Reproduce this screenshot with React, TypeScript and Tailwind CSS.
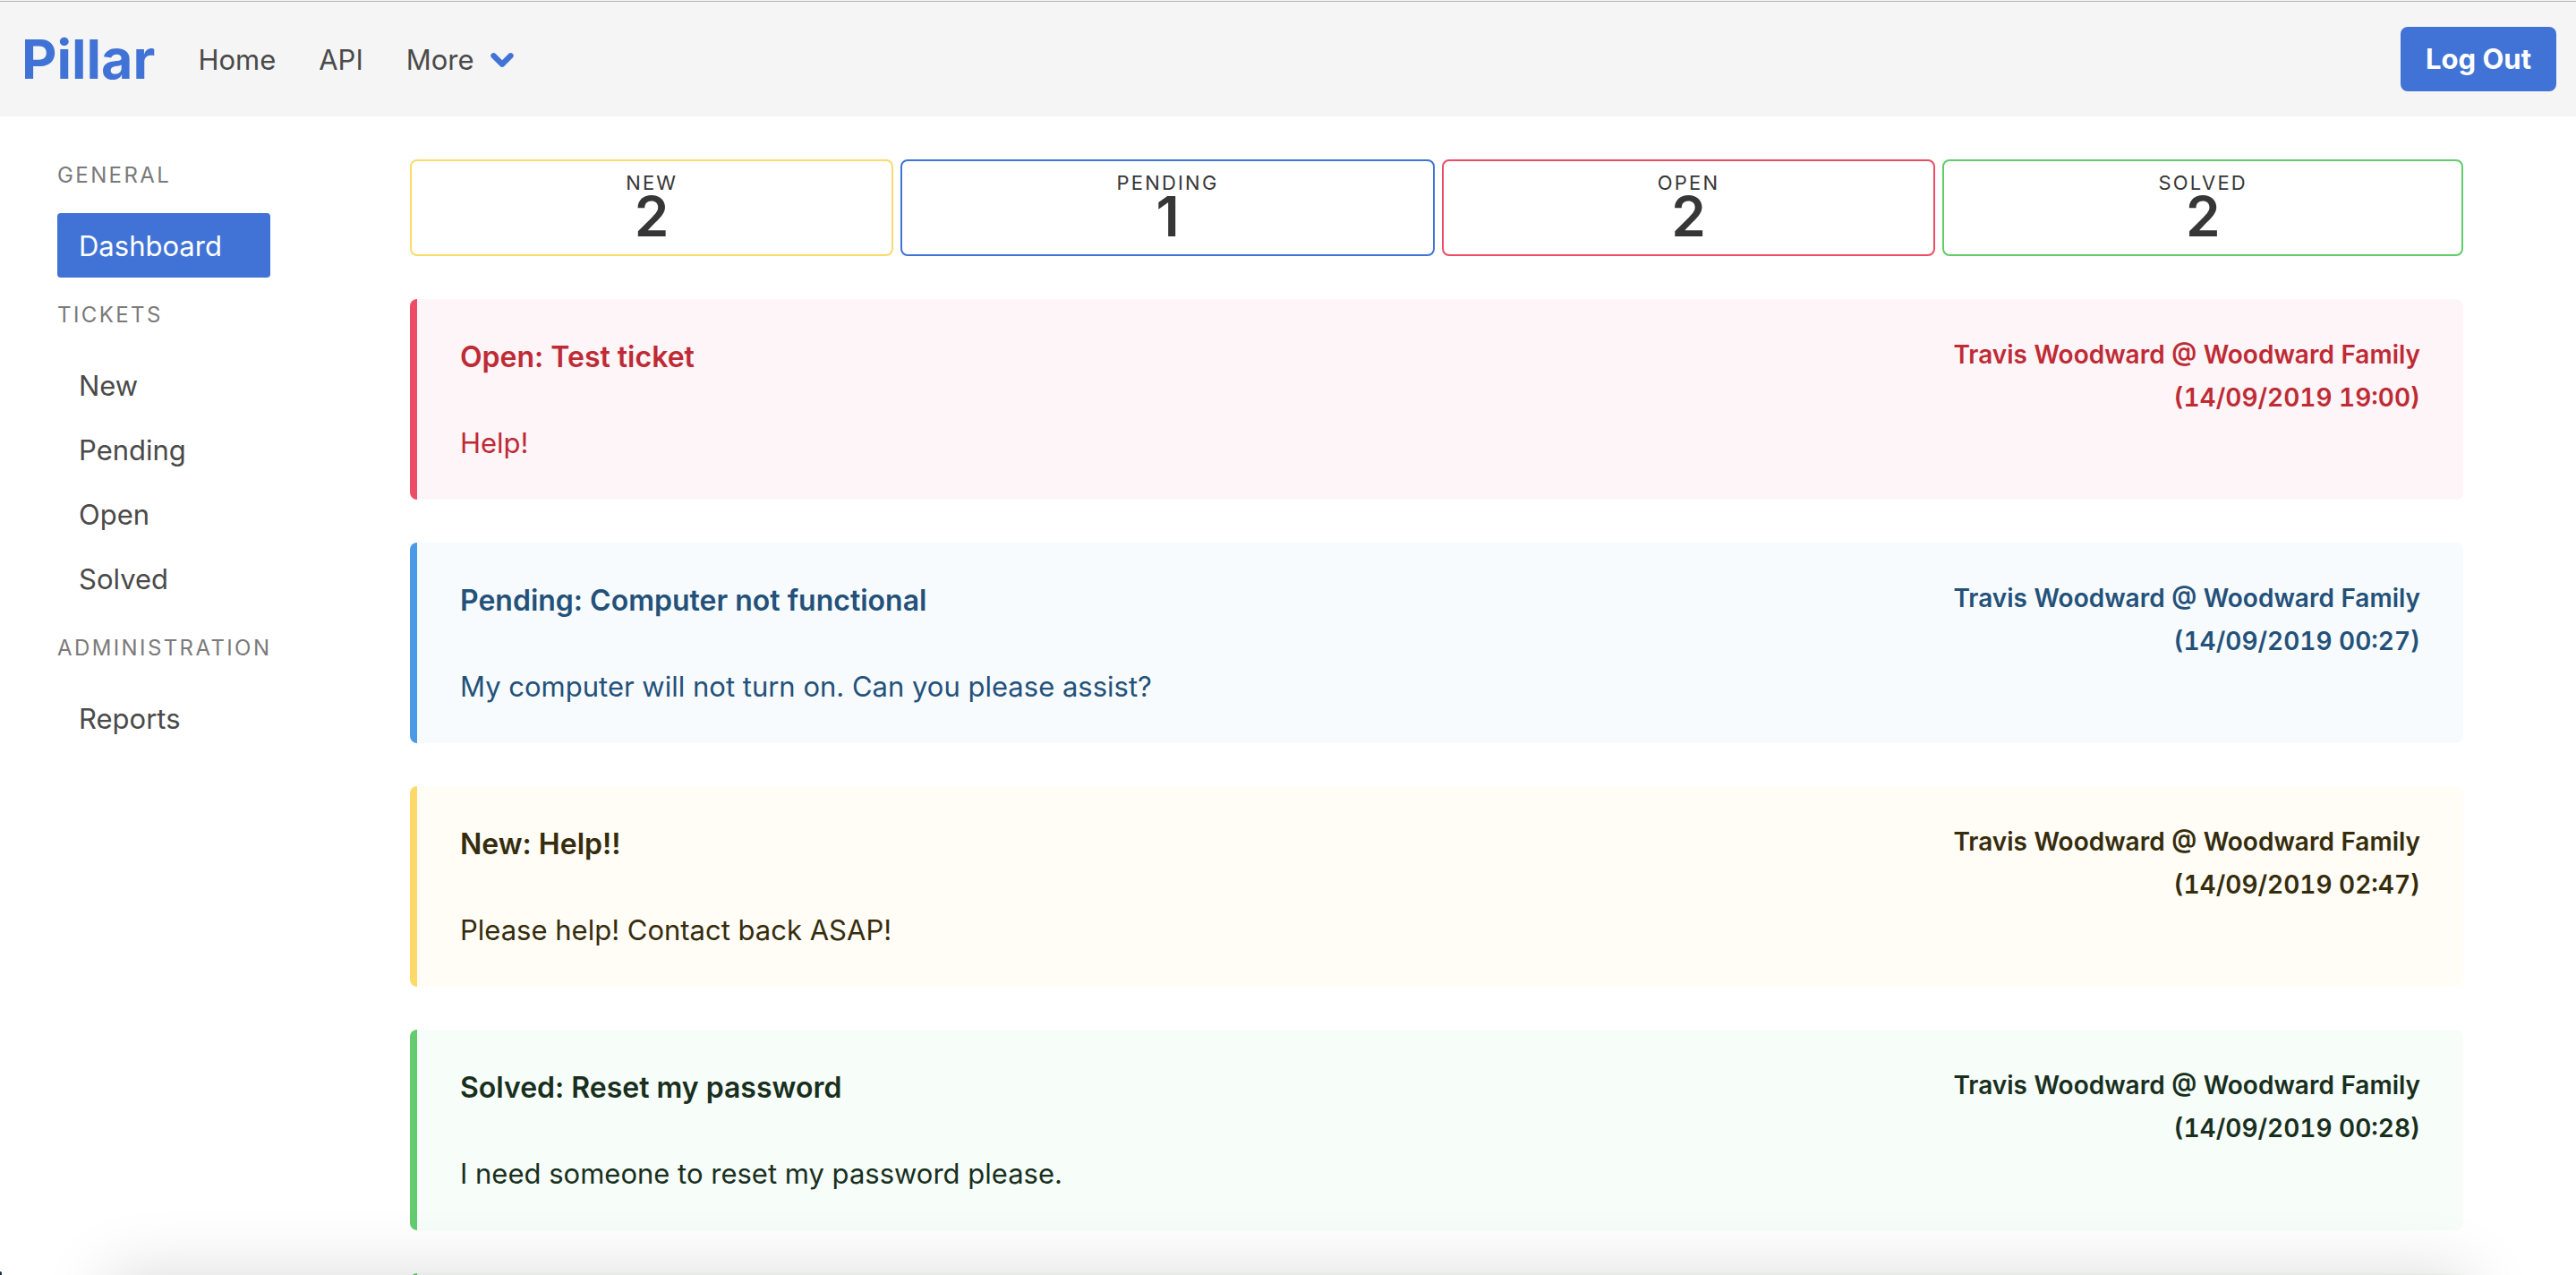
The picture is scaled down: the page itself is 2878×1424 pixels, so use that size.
import { ChevronDown } from "lucide-react";

type Status = "New" | "Pending" | "Open" | "Solved";

const stats = [
  { label: "New", count: 2, border: "border-[#fadb6b]" },
  { label: "Pending", count: 1, border: "border-[#4173d6]" },
  { label: "Open", count: 2, border: "border-[#ec4c66]" },
  { label: "Solved", count: 2, border: "border-[#60cc6a]" },
];

const menu = [
  { label: "General", items: ["Dashboard"] },
  { label: "Tickets", items: ["New", "Pending", "Open", "Solved"] },
  { label: "Administration", items: ["Reports"] },
];

const tone: Record<Status, string> = {
  Open: "bg-[#fef5f8] border-[#ec4c66] text-[#be2b35]",
  Pending: "bg-[#f7fbfe] border-[#4a9ae6] text-[#245179]",
  New: "bg-[#fffdf6] border-[#fdd96a] text-[#352c0d]",
  Solved: "bg-[#f7fdf9] border-[#64cc6e] text-[#182f1e]",
};

const tickets: { status: Status; title: string; body: string; time: string }[] = [
  { status: "Open", title: "Test ticket", body: "Help!", time: "14/09/2019 19:00" },
  {
    status: "Pending",
    title: "Computer not functional",
    body: "My computer will not turn on. Can you please assist?",
    time: "14/09/2019 00:27",
  },
  { status: "New", title: "Help!!", body: "Please help! Contact back ASAP!", time: "14/09/2019 02:47" },
  {
    status: "Solved",
    title: "Reset my password",
    body: "I need someone to reset my password please.",
    time: "14/09/2019 00:28",
  },
];

function Header() {
  return (
    <div className="bg-[#f5f5f5] pt-px">
      <header className="flex items-center justify-between border-t border-[#b0b5b2] py-7 pr-[22px] text-[#4a4a4a]">
        <nav className="flex items-center" aria-label="Main">
          <a href="#" className="px-6 text-[61px] leading-[72px] font-bold text-[#4173d6]">Pillar</a>
          <a href="#" className="px-6 pt-0.5">Home</a>
          <a href="#" className="px-6 pt-0.5">API</a>
          <button type="button" className="flex items-center gap-3 px-6 pt-0.5">
            More
            <ChevronDown className="size-[38px] text-[#4173d6]" strokeWidth={4} />
          </button>
        </nav>
        <button type="button" className="rounded-lg bg-[#4173d6] px-7 py-3 font-bold text-white">
          Log Out
        </button>
      </header>
    </div>
  );
}

function Sidebar() {
  return (
    <aside className="w-[238px] shrink-0">
      {menu.map((group) => (
        <section key={group.label} className="mb-6">
          <h2 className="mb-6 text-[24px] leading-9 tracking-widest text-[#7a7a7a] uppercase">{group.label}</h2>
          <ul>
            {group.items.map((item) => (
              <li key={item}>
                <a
                  href="#"
                  className={
                    item === "Dashboard"
                      ? "block rounded-sm bg-[#4173d6] px-6 pt-[17px] pb-[15px] leading-10 text-white"
                      : "block rounded-sm px-6 pt-[17px] pb-[15px] leading-10"
                  }
                >
                  {item}
                </a>
              </li>
            ))}
          </ul>
        </section>
      ))}
    </aside>
  );
}

export default function App() {
  return (
    <div className="relative h-screen overflow-hidden bg-white font-['Inter',sans-serif] text-[31px] leading-[48px] text-[#4a4a4a]">
      <Header />
      <div className="flex gap-[156px] pt-12 pr-[126px] pl-16">
        <Sidebar />
        <main className="min-w-0 flex-1">
          <dl className="flex gap-2 text-center text-[#363636]">
            {stats.map((s) => (
              <div key={s.label} className={`flex-auto rounded-lg border-2 px-10 pt-2 pb-5 ${s.border}`}>
                <dt className="text-[22px] leading-8 tracking-widest uppercase">{s.label}</dt>
                <dd className="text-[62px] leading-[44px] font-semibold">{s.count}</dd>
              </div>
            ))}
          </dl>
          <div className="mt-12 flex flex-col gap-12">
            {tickets.map((t) => (
              <article
                key={t.time}
                className={`flex items-start justify-between rounded-lg border-l-8 px-12 py-[38px] ${tone[t.status]}`}
              >
                <div className="flex flex-col gap-12 pt-[3px] pb-px">
                  <h3 className="text-[32px] leading-[48px] font-semibold">{t.status}: {t.title}</h3>
                  <p>{t.body}</p>
                </div>
                <p className="text-right text-[28px] leading-[48px] font-semibold tabular-nums">
                  Travis Woodward @ Woodward Family
                  <br />({t.time})
                </p>
              </article>
            ))}
            <article className={`rounded-lg border-l-8 py-10 ${tone.Solved}`} />
          </div>
        </main>
      </div>
      <div className="absolute inset-x-[120px] -bottom-40 h-40 shadow-[0_0_74px_0_rgba(0,0,0,0.15)]" />
      <div className="absolute bottom-0 left-0 h-1 w-0.5 rounded-tr-full bg-[#12303a]" />
    </div>
  );
}
